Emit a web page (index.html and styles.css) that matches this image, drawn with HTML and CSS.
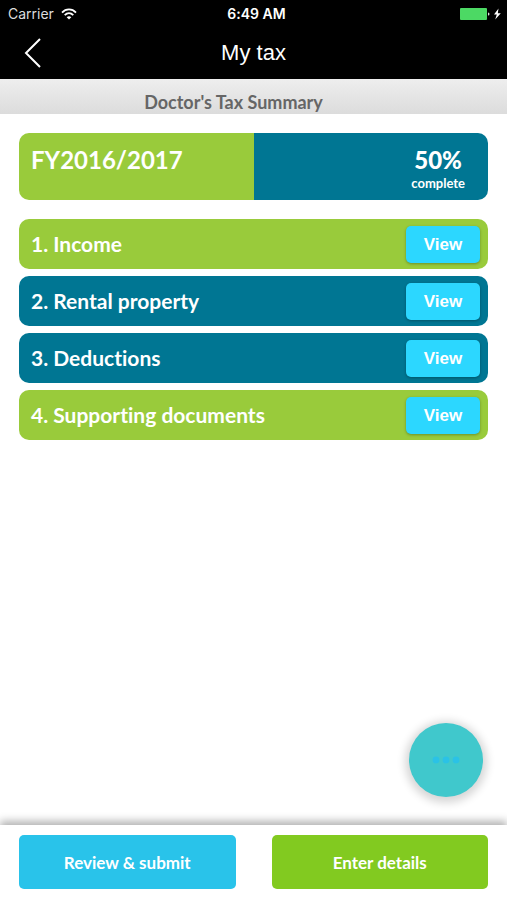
FILE: index.html
```html
<!DOCTYPE html>
<html lang="en">
<head>
    <meta charset="UTF-8">
    <meta name="viewport" content="width=device-width, initial-scale=1.0">
    <title>My tax</title>
    <link rel="stylesheet" href="styles.css">
</head>
<body>

    <header class="top">
        <div class="status-bar">
            <div class="status-left">
                <span>Carrier</span>
                <svg width="16" height="12" viewBox="0 0 16 12" fill="none" stroke="#fff" stroke-width="1.8">
                    <path d="M1 4.6C5 .4 11 .4 15 4.6"/>
                    <path d="M3.7 7.2c2.6-2.6 6-2.6 8.6 0"/>
                    <path d="M8 11.6L5.7 9.2c1.4-1.2 3.2-1.2 4.6 0z" fill="#fff" stroke="none"/>
                </svg>
            </div>
            <span class="status-time">6:49 AM</span>
            <div class="status-right">
                <svg width="41" height="12" viewBox="0 0 41 12">
                    <rect x="0" y="0" width="27" height="12" rx="1" fill="#4cd964"/>
                    <path d="M28 4.5a1.5 1.5 0 0 1 0 3z" fill="#ddd"/>
                    <path d="M38.5 .5L34 6.6h2.8L35.2 11.5l5.6-6.3h-3z" fill="#fff"/>
                </svg>
            </div>
        </div>
        <nav class="nav-bar">
            <button class="back" aria-label="Back">
                <svg width="18" height="30" viewBox="0 0 18 30" fill="none" stroke="#fff" stroke-width="2">
                    <path d="M16 1L2 15l14 14"/>
                </svg>
            </button>
            <h1>My tax</h1>
        </nav>
    </header>

    <h2 class="subtitle">Doctor's Tax Summary</h2>

    <main class="content">
        <section class="year">
            <div class="year-name">FY2016/2017</div>
            <div class="year-progress">
                <div class="year-status">
                    <strong>50%</strong>
                    <span>complete</span>
                </div>
            </div>
        </section>

        <ul class="sections">
            <li class="row green"><span>1. Income</span><button class="view">View</button></li>
            <li class="row blue"><span>2. Rental property</span><button class="view">View</button></li>
            <li class="row blue"><span>3. Deductions</span><button class="view">View</button></li>
            <li class="row green"><span>4. Supporting documents</span><button class="view">View</button></li>
        </ul>
    </main>

    <footer class="actions">
        <button class="fab" aria-label="More">
            <svg width="28" height="8" viewBox="0 0 28 8" fill="#2bc2e6">
                <circle cx="4" cy="4" r="3.4"/>
                <circle cx="14" cy="4" r="3.4"/>
                <circle cx="24" cy="4" r="3.4"/>
            </svg>
        </button>
        <button class="action submit">Review &amp; submit</button>
        <button class="action enter">Enter details</button>
    </footer>

</body>
</html>
```

FILE: styles.css
```css
:root {
    --green: #99cb3b;
    --blue: #007693;
    --cyan: #2cd7ff;
}

* {
    box-sizing: border-box;
}

body {
    display: flex;
    flex-direction: column;
    min-height: 100vh;
    margin: 0;
    background: #fff;
    font-family: Lato, sans-serif;
    font-variant-ligatures: none;
}

button {
    border: none;
    padding: 0;
    color: #fff;
    cursor: pointer;
}

.top {
    background: #000;
    color: #fff;
}

.status-bar {
    display: grid;
    grid-template-columns: 1fr auto 1fr;
    align-items: center;
    height: 27px;
    padding: 0 6px 0 8px;
    font-family: Inter, sans-serif;
    font-size: 14px;
}

.status-left {
    display: flex;
    align-items: center;
    gap: 7px;
    color: #ddd;
}

.status-time {
    padding-left: 4px;
    font-weight: 600;
}

.status-right {
    display: flex;
    justify-content: flex-end;
}

.nav-bar {
    display: grid;
    grid-template-columns: 1fr auto 1fr;
    align-items: center;
    height: 52px;
    padding: 0 24px;
}

.nav-bar h1 {
    margin: 0;
    font-family: "Liberation Sans", sans-serif;
    font-size: 22px;
    font-weight: normal;
}

.back {
    display: flex;
    justify-self: start;
    background: none;
}

.subtitle {
    margin: 0;
    padding: 13px 40px 2px 0;
    background: linear-gradient(#eee, #dcdcdc);
    color: #666;
    font-size: 18px;
    line-height: 20px;
    text-align: center;
}

.content {
    flex: 1;
    padding: 19px;
}

.year {
    display: flex;
    height: 67px;
    margin-bottom: 19px;
    border-radius: 10px;
    overflow: hidden;
    color: #fff;
}

.year-name,
.year-progress {
    width: 50%;
    padding: 12px;
    font-size: 24px;
    font-weight: bold;
    line-height: 30px;
}

.year-name {
    background: var(--green);
}

.year-progress {
    display: flex;
    justify-content: flex-end;
    padding-right: 23px;
    background: var(--blue);
}

.year-status {
    display: flex;
    flex-direction: column;
    align-items: center;
}

.year-status span {
    font-size: 13px;
    line-height: 16px;
}

.sections {
    display: flex;
    flex-direction: column;
    gap: 7px;
    margin: 0;
    padding: 0;
    list-style: none;
}

.row {
    display: flex;
    justify-content: space-between;
    align-items: center;
    height: 50px;
    padding: 0 8px 0 12px;
    border-radius: 10px;
    color: #fff;
    font-size: 21px;
    font-weight: bold;
    line-height: 24px;
}

.green {
    background: var(--green);
}

.blue {
    background: var(--blue);
}

.view {
    width: 74px;
    height: 37px;
    padding-top: 1px;
    border-radius: 5px;
    background: var(--cyan);
    box-shadow: 0 1px 3px rgba(0, 0, 0, 0.3);
    font-family: "Liberation Sans", sans-serif;
    font-size: 17px;
    font-weight: bold;
}

.actions {
    position: relative;
    display: flex;
    gap: 36px;
    padding: 10px 19px 11px;
    background: #fff;
    box-shadow: 0 -4px 8px rgba(0, 0, 0, 0.3);
}

.action {
    flex: 1;
    height: 54px;
    border-radius: 5px;
    font-family: Lato, sans-serif;
    font-size: 17px;
    font-weight: bold;
}

.submit {
    background: #29c3ea;
}

.enter {
    background: #82ca20;
}

/* floats over the list, above the bottom bar */
.fab {
    position: absolute;
    right: 24px;
    bottom: 103px;
    display: flex;
    justify-content: center;
    align-items: center;
    width: 74px;
    height: 74px;
    border-radius: 50%;
    background: #40c8cc;
    box-shadow: 0 2px 9px 4px rgba(0, 0, 0, 0.16);
}
```
